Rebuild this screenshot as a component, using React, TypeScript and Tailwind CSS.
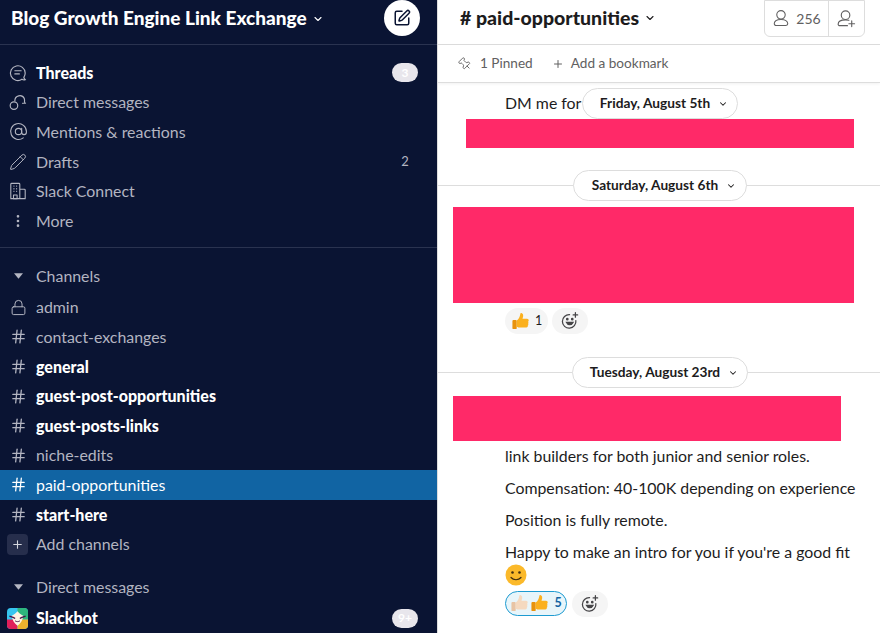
import { AtSign, ChevronDown, EllipsisVertical, Hash, Lock, Pencil, Pin, Plus, SquarePen } from "lucide-react";
import type { ReactNode } from "react";

function ThreadsIcon() {
  return (
    <svg viewBox="0 0 20 20" className="w-[18px] h-[18px]" fill="none" stroke="currentColor" strokeWidth="1.3">
      <path d="M18 17.500c-1.300.4-2.600.2-3.600-.5A8.200 8.200 0 1 1 18 10c0 1.900-.6 3.500-1.500 4.800.2 1 .7 1.900 1.500 2.700Z" />
      <path d="M6.500 7.500h7M6.500 11h5" strokeLinecap="round" />
    </svg>
  );
}

function DmIcon() {
  return (
    <svg viewBox="0 0 20 20" className="w-[18px] h-[18px]" fill="none" stroke="currentColor" strokeWidth="1.3" strokeLinecap="round">
      <path d="M6.500 8.500a5.500 5.500 0 0 1 10.500-2.300c.5 1.600.3 3 .2 3.800l.8 1.400h-3" />
      <circle cx="5.500" cy="14" r="4.200" />
    </svg>
  );
}

function BuildingIcon() {
  return (
    <svg viewBox="0 0 20 20" className="w-[18px] h-[18px]" fill="none" stroke="currentColor" strokeWidth="1.200" strokeLinejoin="round">
      <path d="M2 18.500V2.500c0-.6.400-1 1-1h8c.6 0 1 .4 1 1v16ZM12 8h5c.6 0 1 .4 1 1v9.500h-6" />
      <path d="M5 14.500h4v4H5Z" />
      <path d="M5 4.500h1M8 4.500h1M5 7.500h1M8 7.500h1M5 10.500h1M8 10.500h1" strokeWidth="1.400" />
    </svg>
  );
}

function Caret() {
  return (
    <svg viewBox="0 0 10 6" className="w-[9px] h-[6px] fill-[#b4b6c2]">
      <path d="M0 0h10L5 6Z" />
    </svg>
  );
}

function Row({
  icon,
  label,
  bold,
  active,
  right,
}: {
  icon: ReactNode;
  label: string;
  bold?: boolean;
  active?: boolean;
  right?: ReactNode;
}) {
  return (
    <div className={`h-[29.6px] flex items-center pr-[19px] shrink-0 ${active ? "bg-[#1164a3] text-white" : bold ? "text-white" : "text-[#b3b5c1]"}`}>
      <span className={`w-[36px] flex justify-center shrink-0 ${active ? "text-white" : "text-[#b3b5c1]"}`}>{icon}</span>
      <span className={`flex-1 ${bold ? "text-[16px] font-black" : "text-[15.900px]"}`}>{label}</span>
      {right}
    </div>
  );
}

function Pill({ text }: { text: string }) {
  return (
    <span className="w-[26px] h-[19px] rounded-full bg-[#e8e6ec] text-white text-[12px] font-bold flex items-center justify-center">
      {text}
    </span>
  );
}

function ChannelRow({ label, bold, active }: { label: string; bold?: boolean; active?: boolean }) {
  return <Row icon={<Hash className="w-[17px] h-[17px]" strokeWidth={1.800} />} label={label} bold={bold} active={active} />;
}

function DatePill({ label, className }: { label: string; className: string }) {
  return (
    <div className={`absolute h-[31px] pl-[8px] bg-white border border-[#dddddd] rounded-full flex items-center justify-center gap-[8px] text-[13.700px] font-bold text-[#1d1c1d] ${className}`}>
      {label}
      <ChevronDown className="w-[10px] h-[10px] text-[#1d1c1d]" strokeWidth={2.500} />
    </div>
  );
}

function Thumb({ tone, shade }: { tone: string; shade: string }) {
  return (
    <svg viewBox="0 0 20 20" className="w-[19px] h-[19px]">
      <path d="M1.500 9.500c0-.6.400-1 1-1h2.500c.6 0 1 .4 1 1V17c0 .6-.4 1-1 1H2.500c-.6 0-1-.4-1-1Z" fill={shade} />
      <path d="M6 9c2-1.700 3.300-3.800 3.700-6.500.1-1 .8-1.600 1.600-1.300 1.400.4 1.800 2.100 1.400 3.700l-.6 2.300h4.800c1.200 0 1.900 1 1.700 1.900-.1.500-.4.900-.7 1.100.6.500.7 1.500.1 2.100.4.600.3 1.500-.3 2 .2.900-.3 2.100-1.600 2.100H10c-1.700 0-3-.5-4-1Z" fill={tone} />
    </svg>
  );
}

function AddReaction() {
  return (
    <span className="w-[36px] h-[26px] rounded-full bg-[#f5f5f5] flex items-center justify-center">
      <svg viewBox="0 0 20 20" className="w-[18px] h-[18px]" fill="none" stroke="#454447" strokeWidth="1.400" strokeLinecap="round">
        <path d="M16.500 9.500A7.500 7.500 0 1 1 9.500 3" />
        <path d="M6 11.500c1.500 3.500 6 3.500 7.500 0Z" fill="#454447" />
        <circle cx="7" cy="8" r=".8" fill="#454447" />
        <circle cx="12.500" cy="8" r=".8" fill="#454447" />
        <path d="M16 .8v5M13.500 3.300h5" />
      </svg>
    </span>
  );
}

function Slackbot() {
  return (
    <svg viewBox="0 0 22 22" className="w-[21px] h-[21px]">
      <rect width="22" height="22" rx="4" fill="#36c5f0" />
      <path d="M11 0h7a4 4 0 0 1 4 4v8H11Z" fill="#2eb67d" />
      <path d="M0 12h11v10H4a4 4 0 0 1-4-4Z" fill="#e01e5a" />
      <path d="M22 12H11v10h7a4 4 0 0 0 4-4Z" fill="#ecb22e" />
      <path d="M11 3.500c1.500 2 3.500 3.500 6 4.500-.5 4.500-2.500 8-6 10.500-3.500-2.500-5.500-6-6-10.500 2.500-1 4.500-2.500 6-4.500Z" fill="#fdf3e4" />
      <path d="M2.500 8.500l4.500 1.500 1.500 1M19.500 8.500L15 10l-1.500 1" stroke="#4a154b" strokeWidth="1.500" fill="none" />
      <path d="M8.500 13.500c1.500 1 3.500 1 5 0" stroke="#4a154b" strokeWidth="1" fill="none" />
    </svg>
  );
}

function Smiley() {
  return (
    <svg viewBox="0 0 22 22" className="w-[22px] h-[22px]">
      <circle cx="11" cy="11" r="10.500" fill="#fbb92a" />
      <circle cx="7.500" cy="8.500" r="1.300" fill="#3f2d10" />
      <circle cx="14.500" cy="8.500" r="1.300" fill="#3f2d10" />
      <path d="M6 13.500c2.500 3 7.500 3 10 0" stroke="#3f2d10" strokeWidth="1.200" fill="none" strokeLinecap="round" />
    </svg>
  );
}

export default function App() {
  return (
    <div className="w-[880px] h-[633px] flex overflow-hidden bg-white font-['Lato',sans-serif]">
      {/* Sidebar */}
      <aside className="w-[437px] shrink-0 h-full bg-[#0a1433] flex flex-col overflow-hidden">
        <div className="h-[45px] shrink-0 border-b border-[#2a3350] flex items-center pl-[11px] pr-[17px]">
          <span className="text-[19px] font-black text-white whitespace-nowrap -mt-[7px]">Blog Growth Engine Link Exchange</span>
          <ChevronDown className="w-[12px] h-[12px] text-white ml-[5px] -mt-[7px]" strokeWidth={2.200} />
          <span className="ml-auto w-[36px] h-[36px] rounded-full bg-white flex items-center justify-center -mt-[9px]">
            <SquarePen className="w-[18px] h-[18px] text-[#0a1433]" strokeWidth={2} />
          </span>
        </div>

        <div className="pt-[13px] h-[203px] shrink-0 border-b border-[#2a3350]">
          <Row icon={<ThreadsIcon />} label="Threads" bold right={<Pill text="3" />} />
          <Row icon={<DmIcon />} label="Direct messages" />
          <Row icon={<AtSign className="w-[19px] h-[19px]" strokeWidth={1.400} />} label="Mentions & reactions" />
          <Row
            icon={<Pencil className="w-[18px] h-[18px]" strokeWidth={1.300} />}
            label="Drafts"
            right={<span className="w-[26px] text-center text-[13px] text-[#b3b5c1]">2</span>}
          />
          <Row icon={<BuildingIcon />} label="Slack Connect" />
          <Row icon={<EllipsisVertical className="w-[16px] h-[16px]" strokeWidth={2} />} label="More" />
        </div>

        <div className="h-[29.600px] mt-[13px] flex items-center text-[#b3b5c1] shrink-0">
          <span className="w-[36px] flex justify-center"><Caret /></span>
          <span className="text-[15.900px]">Channels</span>
        </div>
        <div className="mt-[2px]">
          <Row icon={<Lock className="w-[17px] h-[17px]" strokeWidth={1.400} />} label="admin" />
          <ChannelRow label="contact-exchanges" />
          <ChannelRow label="general" bold />
          <ChannelRow label="guest-post-opportunities" bold />
          <ChannelRow label="guest-posts-links" bold />
          <ChannelRow label="niche-edits" />
          <ChannelRow label="paid-opportunities" active />
          <ChannelRow label="start-here" bold />
          <Row
            icon={
              <span className="w-[21px] h-[21px] rounded-[4px] bg-[#262e4c] flex items-center justify-center -ml-[2px] text-[#d5d7df]">
                <Plus className="w-[13px] h-[13px]" strokeWidth={2} />
              </span>
            }
            label="Add channels"
          />
        </div>
        <div className="h-[29.600px] mt-[13px] flex items-center text-[#b3b5c1] shrink-0">
          <span className="w-[36px] flex justify-center"><Caret /></span>
          <span className="text-[15.900px]">Direct messages</span>
        </div>
        <div className="h-[29.600px] mt-[2px] flex items-center pr-[19px] shrink-0 text-white">
          <span className="w-[36px] flex justify-center -ml-[1px]"><Slackbot /></span>
          <span className="text-[16px] font-black flex-1 ml-[1px]">Slackbot</span>
          <Pill text="9+" />
        </div>
      </aside>

      {/* Channel */}
      <main className="flex-1 h-full border-l border-[#dddddd] flex flex-col relative overflow-hidden">
        <header className="h-[45px] shrink-0 border-b border-[#dddddd] flex items-center pl-[22px] pr-[15px]">
          <span className="text-[19.500px] font-black text-[#1d1c1d] whitespace-nowrap -mt-[8px]"># paid-opportunities</span>
          <ChevronDown className="w-[12px] h-[12px] text-[#1d1c1d] ml-[5px] -mt-[8px]" strokeWidth={2.200} />
          <div className="ml-auto h-[37px] -mt-[8px] border border-[#dddddd] rounded-b-[6px] flex items-stretch text-[#616061]">
            <div className="w-[64px] flex items-center justify-center gap-[6px] border-r border-[#dddddd]">
              <svg viewBox="0 0 20 20" className="w-[18px] h-[18px]" fill="none" stroke="#616061" strokeWidth="1.200">
                <circle cx="10" cy="6.500" r="4.700" />
                <path d="M2.500 16.500c0-3 3-4.800 7.500-4.800s7.500 1.800 7.500 4.800c0 1-1 1.800-2 1.800h-11c-1 0-2-.8-2-1.800Z" />
              </svg>
              <span className="text-[14px]">256</span>
            </div>
            <div className="w-[35px] flex items-center justify-center">
              <svg viewBox="0 0 20 20" className="w-[19px] h-[19px]" fill="none" stroke="#616061" strokeWidth="1.200" strokeLinecap="round">
                <circle cx="9" cy="6.500" r="4.500" />
                <path d="M11 17.500H3c-1 0-1.800-.7-1.800-1.500 0-2.800 3-4.500 7.800-4.500 1.300 0 2.500.1 3.500.4M15.500 12.500v6M12.500 15.500h6" />
              </svg>
            </div>
          </div>
        </header>

        <div className="h-[38px] shrink-0 border-b border-[#dddddd] shadow-[0_1px_3px_rgba(0,0,0,0.06)] flex items-center pl-[20px] text-[13.600px] text-[#616061]">
          <Pin className="w-[14px] h-[14px] -rotate-45 mr-[8px]" strokeWidth={1.500} />
          <span>1 Pinned</span>
          <Plus className="w-[12px] h-[12px] ml-[19px] mr-[7px]" strokeWidth={2} />
          <span>Add a bookmark</span>
        </div>

        {/* Messages */}
        <div className="flex-1 relative overflow-hidden text-[15.870px] text-[#1d1c1d]">
          <div className="h-[35px] pl-[67px] flex items-end leading-[30px]">DM me for</div>
          <div className="ml-[28px] mt-[1px] w-[388px] h-[29px] bg-[#ff2968]" />

          <div className="mt-[37px] h-px bg-[#dddddd]" />
          <div className="ml-[15px] mt-[21px] w-[401px] h-[96px] bg-[#ff2968]" />
          <div className="ml-[67px] mt-[5px] flex gap-[4px]">
            <span className="w-[43px] h-[26px] rounded-full bg-[#f5f5f5] flex items-center justify-center gap-[5px] text-[12.500px]">
              <Thumb tone="#fbb01e" shade="#e8920c" />1
            </span>
            <AddReaction />
          </div>

          <div className="mt-[38px] h-px bg-[#dddddd]" />
          <div className="ml-[15px] mt-[23px] w-[388px] h-[45px] bg-[#ff2968]" />

          <p className="ml-[67px] mt-[4px] leading-[22px]">link builders for both junior and senior roles.</p>
          <p className="ml-[67px] mt-[10px] leading-[22px] whitespace-nowrap">Compensation: 40-100K depending on experience</p>
          <p className="ml-[67px] mt-[10px] leading-[22px]">Position is fully remote.</p>
          <p className="ml-[67px] mt-[10px] leading-[22px] whitespace-nowrap">Happy to make an intro for you if you're a good fit</p>
          <div className="ml-[67px] mt-[1px] h-[22px]"><Smiley /></div>
          <div className="ml-[67px] mt-[5px] flex gap-[5px]">
            <span className="w-[62px] h-[25px] rounded-full bg-[#e8f5fa] border border-[#1d9bd1] flex items-center justify-center gap-[1px] text-[12.500px] font-bold text-[#1264a3]">
              <Thumb tone="#f5d9bf" shade="#e8c4a4" />
              <Thumb tone="#fbb01e" shade="#e8920c" />
              <span className="ml-[4px]">5</span>
            </span>
            <AddReaction />
          </div>

          <DatePill label="Friday, August 5th" className="left-[144px] top-[5px] w-[156px]" />
          <DatePill label="Saturday, August 6th" className="left-[135px] top-[87px] w-[174px]" />
          <DatePill label="Tuesday, August 23rd" className="left-[134px] top-[274px] w-[176px]" />
        </div>
      </main>
    </div>
  );
}
